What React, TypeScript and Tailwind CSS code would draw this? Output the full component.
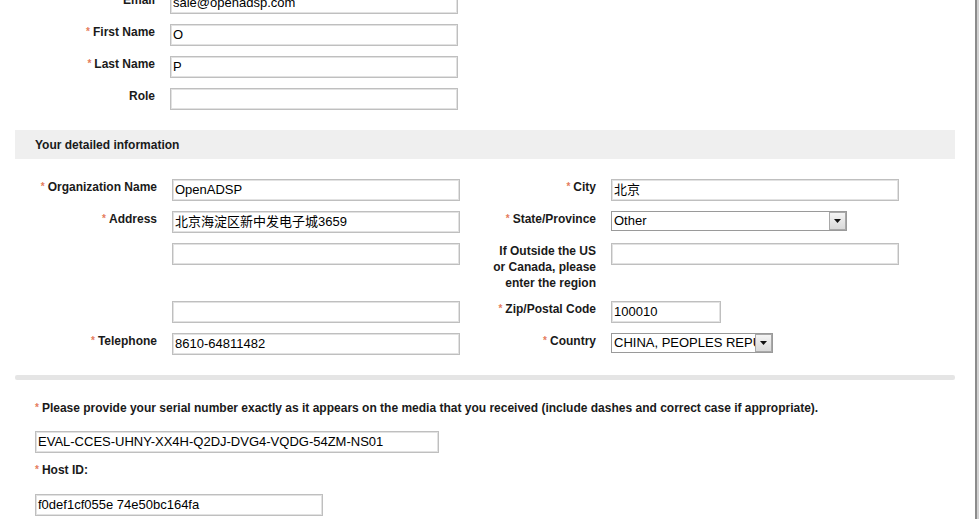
import React from 'react';

const font = "font-['Liberation_Sans',Arial,'Noto_Sans_CJK_SC',sans-serif]";

function Star() {
  return <span className="text-[#e57c5c] text-[10px] mr-[3px] relative -top-[1px]">*</span>;
}

function Label({ text, req, className = '' }: { text: React.ReactNode; req?: boolean; className?: string }) {
  return (
    <div className={`text-right text-[12px] leading-[16px] font-bold text-[#1a1a1a] pr-[15px] ${className}`}>
      {req && <Star />}
      {text}
    </div>
  );
}

function Field({ value = '', width = 'w-[288px]' }: { value?: string; width?: string }) {
  return (
    <div
      className={`${width} h-[22px] border border-[#bfbfbf] shadow-[inset_0_0_0_1px_#e2e2e2] bg-white flex items-center px-[2px] text-[13px] font-normal text-black whitespace-nowrap overflow-hidden`}
    >
      {value}
    </div>
  );
}

function Select({ value, width }: { value: string; width: string }) {
  return (
    <div className={`${width} h-[20px] border border-[#9a9a9a] bg-white flex items-center text-[13px] text-black`}>
      <span className="flex-1 pl-[2px] overflow-hidden whitespace-nowrap">{value}</span>
      <span className="w-[17px] h-[18px] border border-[#a8a8a8] bg-gradient-to-b from-[#f4f4f4] to-[#d9d9d9] flex items-center justify-center shrink-0">
        <svg width="7" height="4" viewBox="0 0 7 4">
          <path d="M0 0h7L3.5 4z" fill="#111" />
        </svg>
      </span>
    </div>
  );
}

export default function App() {
  return (
    <div className={`w-[979px] h-[519px] overflow-hidden bg-white flex ${font}`}>
      <div className="w-[975px] shrink-0">
        {/* contact */}
        <div className="grid grid-cols-[170px_288px] gap-y-[10px] -mt-[8px]">
          <Label text="Email" />
          <Field value="sale@openadsp.com" />
          <Label text="First Name" req />
          <Field value="O" />
          <Label text="Last Name" req />
          <Field value="P" />
          <Label text="Role" />
          <Field />
        </div>

        <div className="ml-[15px] mr-[20px] mt-[20px] h-[29px] bg-[#efefef] flex items-center pl-[20px] text-[12px] font-bold text-[#1a1a1a]">
          Your detailed information
        </div>

        <div className="grid grid-cols-[172px_288px_151px_288px] gap-y-[10px] mt-[20px]">
          <Label text="Organization Name" req />
          <Field value="OpenADSP" />
          <Label text="City" req />
          <Field value="北京" />

          <Label text="Address" req />
          <Field value="北京海淀区新中发电子城3659" />
          <Label text="State/Province" req />
          <Select value="Other" width="w-[236px]" />

          <div />
          <Field />
          <Label text={<>If Outside the US<br />or Canada, please<br />enter the region</>} />
          <Field />

          <div />
          <Field />
          <Label text="Zip/Postal Code" req />
          <Field value="100010" width="w-[110px]" />

          <Label text="Telephone" req />
          <Field value="8610-64811482" />
          <Label text="Country" req />
          <Select value="CHINA, PEOPLES REPUBLIC OF" width="w-[162px]" />
        </div>

        <div className="ml-[15px] mr-[20px] mt-[20px] h-[5px] rounded-[2px] bg-[#e5e5e5]" />

        <div className="pl-[35px] mt-[20px] text-[12px] leading-[16px] font-bold text-[#1a1a1a]">
          <div>
            <Star />
            Please provide your serial number exactly as it appears on the media that you received (include dashes and correct case if appropriate).
          </div>
          <div className="mt-[14px]">
            <Field value="EVAL-CCES-UHNY-XX4H-Q2DJ-DVG4-VQDG-54ZM-NS01" width="w-[404px]" />
          </div>
          <div className="mt-[9px]">
            <Star />
            Host ID:
          </div>
          <div className="mt-[15px]">
            <Field value="f0def1cf055e 74e50bc164fa" width="w-[288px]" />
          </div>
        </div>
      </div>
      <div className="w-[2px] bg-[#8c8c8c] shrink-0" />
      <div className="w-[2px] bg-[#d2d2d2] shrink-0" />
    </div>
  );
}
